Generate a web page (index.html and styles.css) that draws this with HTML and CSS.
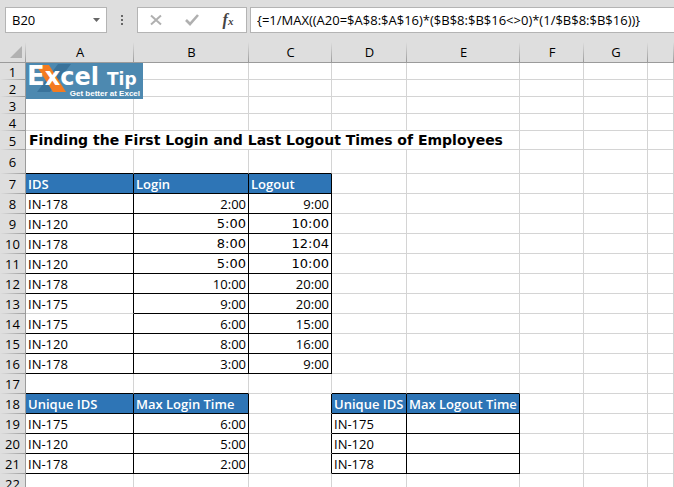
FILE: index.html
```html
<!DOCTYPE html>
<html lang="en">
<head>
	<meta charset="UTF-8">
	<title>Login and Logout Times</title>
	<link rel="stylesheet" href="styles.css">
</head>
<body>
	<div class="toolbar">
		<div class="name-box">
			<input class="name-input" type="text" value="B20" aria-label="Name Box">
			<button class="drop" type="button" aria-label="Open names"><svg width="7" height="4" viewBox="0 0 7 4"><path d="M0 0h7L3.5 4z" fill="#666"/></svg></button>
		</div>
		<span class="dots"><i></i><i></i><i></i></span>
		<div class="tools">
			<button type="button" aria-label="Cancel"><svg width="12" height="12" viewBox="0 0 12 12"><path d="M1 1.500l10 9M11 1.500L1 10.500" stroke="#b0b0b0" stroke-width="2" fill="none"/></svg></button>
			<button type="button" aria-label="Enter"><svg width="14" height="12" viewBox="0 0 14 12"><path d="M1 6l4 4L13 1" stroke="#b0b0b0" stroke-width="2.600" fill="none"/></svg></button>
			<button class="fx" type="button" aria-label="Insert Function"><span>f<small>x</small></span></button>
		</div>
		<input class="formula" type="text" aria-label="Formula" value="{=1/MAX((A20=$A$8:$A$16)*($B$8:$B$16&lt;&gt;0)*(1/$B$8:$B$16))}">
	</div>

	<table class="sheet">
		<colgroup>
			<col class="c-num"><col class="c-a"><col class="c-b"><col class="c-c"><col class="c-d"><col class="c-e"><col class="c-f"><col class="c-g"><col>
		</colgroup>
		<thead>
			<tr><th class="corner"><svg width="12" height="12" viewBox="0 0 12 12"><path d="M12 0v12H0z" fill="#b1b1b1"/></svg></th><th>A</th><th>B</th><th>C</th><th>D</th><th>E</th><th>F</th><th>G</th><th></th></tr>
		</thead>
		<tbody>
			<tr class="short">
				<th>1</th>
				<td class="logo-cell">
					<svg class="logo" width="117" height="36" viewBox="0 0 117 36">
						<rect width="117" height="36" fill="#4d89b0"/>
						<path d="M32 1h13L24 29H11z" fill="#3a739b"/>
						<path d="M10 2h13l17 27H27z" fill="#f47b20"/>
						<text class="logo-big" x="1" y="22"><tspan font-size="26">E</tspan><tspan font-size="24">xcel</tspan></text>
						<text class="logo-big" x="81" y="22" font-size="17">Tip</text>
						<text class="logo-small" x="114" y="33" text-anchor="end">Get better at Excel</text>
					</svg>
				</td>
				<td></td><td></td><td></td><td></td><td></td><td></td><td></td>
			</tr>
			<tr class="short"><th>2</th><td></td><td></td><td></td><td></td><td></td><td></td><td></td><td></td></tr>
			<tr class="short"><th>3</th><td></td><td></td><td></td><td></td><td></td><td></td><td></td><td></td></tr>
			<tr class="short"><th>4</th><td></td><td></td><td></td><td></td><td></td><td></td><td></td><td></td></tr>
			<tr class="title-row"><th>5</th><td colspan="5" class="title">Finding the First Login and Last Logout Times of Employees</td><td></td><td></td><td></td></tr>
			<tr class="tall"><th>6</th><td class="u"></td><td class="u"></td><td class="u"></td><td></td><td></td><td></td><td></td><td></td></tr>
			<tr><th>7</th><td class="box head">IDS</td><td class="box head">Login</td><td class="box head">Logout</td><td></td><td></td><td></td><td></td><td></td></tr>
			<tr><th>8</th><td class="box">IN-178</td><td class="box time">2:00</td><td class="box time">9:00</td><td></td><td></td><td></td><td></td><td></td></tr>
			<tr><th>9</th><td class="box">IN-120</td><td class="box time wide">5:00</td><td class="box time wide">10:00</td><td></td><td></td><td></td><td></td><td></td></tr>
			<tr><th>10</th><td class="box">IN-178</td><td class="box time wide">8:00</td><td class="box time wide">12:04</td><td></td><td></td><td></td><td></td><td></td></tr>
			<tr><th>11</th><td class="box">IN-120</td><td class="box time wide">5:00</td><td class="box time wide">10:00</td><td></td><td></td><td></td><td></td><td></td></tr>
			<tr><th>12</th><td class="box">IN-178</td><td class="box time">10:00</td><td class="box time">20:00</td><td></td><td></td><td></td><td></td><td></td></tr>
			<tr><th>13</th><td class="r">IN-175</td><td class="box time">9:00</td><td class="box time">20:00</td><td></td><td></td><td></td><td></td><td></td></tr>
			<tr><th>14</th><td class="box">IN-175</td><td class="box time">6:00</td><td class="box time">15:00</td><td></td><td></td><td></td><td></td><td></td></tr>
			<tr><th>15</th><td class="box">IN-120</td><td class="box time">8:00</td><td class="box time">16:00</td><td></td><td></td><td></td><td></td><td></td></tr>
			<tr><th>16</th><td class="box">IN-178</td><td class="box time">3:00</td><td class="box time">9:00</td><td></td><td></td><td></td><td></td><td></td></tr>
			<tr><th>17</th><td class="u"></td><td class="u"></td><td></td><td class="u"></td><td class="u"></td><td></td><td></td><td></td></tr>
			<tr><th>18</th><td class="box head">Unique IDS</td><td class="box head">Max Login Time</td><td class="r"></td><td class="box head">Unique IDS</td><td class="box head">Max Logout Time</td><td></td><td></td><td></td></tr>
			<tr><th>19</th><td class="box">IN-175</td><td class="box time">6:00</td><td class="r"></td><td class="box">IN-175</td><td class="box"></td><td></td><td></td><td></td></tr>
			<tr><th>20</th><td class="box">IN-120</td><td class="box time">5:00</td><td class="r"></td><td class="box">IN-120</td><td class="box"></td><td></td><td></td><td></td></tr>
			<tr><th>21</th><td class="box">IN-178</td><td class="box time">2:00</td><td class="r"></td><td class="box">IN-178</td><td class="box"></td><td></td><td></td><td></td></tr>
			<tr><th>22</th><td></td><td></td><td></td><td></td><td></td><td></td><td></td><td></td></tr>
		</tbody>
	</table>
</body>
</html>
```

FILE: styles.css
```css
* {
	box-sizing: border-box;
}
body {
	margin: 0;
	height: 100vh;
	overflow: hidden;
	background: #fff;
	color: #000;
	font-family: "Open Sans", "Noto Sans", sans-serif;
	font-size: 13px;
}
button, input {
	margin: 0;
	padding: 0;
	border: 0;
	background: none;
	color: inherit;
	font: inherit;
}

/* formula bar */
.toolbar {
	display: flex;
	height: 42px;
	padding: 7px 0 9px 5px;
	background: #dedede;
}
.name-box, .tools, .formula {
	border: 1px solid #b4b4b4;
	background: #fff;
}
.name-box {
	display: flex;
	width: 102px;
}
.name-input {
	flex: 1;
	min-width: 0;
	padding-left: 6px;
}
.drop {
	display: flex;
	align-items: center;
	justify-content: center;
	width: 20px;
}
.dots {
	display: flex;
	flex-direction: column;
	align-items: center;
	justify-content: center;
	gap: 2px;
	width: 30px;
}
.dots i {
	width: 2px;
	height: 2px;
	background: #666;
}
.tools {
	display: flex;
	width: 110px;
}
.tools button {
	display: flex;
	flex: 1;
	align-items: center;
	justify-content: center;
}
.tools .fx {
	color: #444;
	font: italic bold 16px/16px "Liberation Serif", serif;
}
.fx small {
	font-size: 11px;
}
.formula {
	flex: 1;
	min-width: 0;
	margin-left: 3px;
	padding-left: 6px;
	border-right: 0;
}

/* grid */
.sheet {
	width: 100%;
	table-layout: fixed;
	border-collapse: separate;
	border-spacing: 0;
}
.c-num { width: 26px; }
.c-a { width: 108px; }
.c-b { width: 115px; }
.c-c { width: 83px; }
.c-d { width: 75px; }
.c-e { width: 113px; }
.c-f, .c-g { width: 64px; }
th, td {
	height: 20px;
	padding: 0 2px;
	border-right: 1px solid #d4d4d4;
	border-bottom: 1px solid #d4d4d4;
	line-height: 14px;
	text-align: left;
	white-space: nowrap;
}
th {
	padding: 0;
	border-right-color: #9b9b9b;
	border-bottom: 0;
	background: linear-gradient(to right, #dedede, #9b9b9b) bottom / 100% 1px no-repeat #dedede;
	font-weight: normal;
	text-align: center;
}
thead th {
	height: 21px;
	border-right: 0;
	border-bottom: 1px solid #9b9b9b;
	background: linear-gradient(#dedede, #9b9b9b) right / 1px 100% no-repeat #dedede;
}
.corner {
	padding-right: 4px;
}
.corner svg {
	display: block;
	margin-left: auto;
}
.short th, .short td {
	height: 17px;
}
.title-row th, .title-row td {
	height: 19px;
}
.tall th, .tall td {
	height: 24px;
}
.logo-cell {
	position: relative;
}
.logo {
	position: absolute;
	top: 0;
	left: 0;
}
.logo-big {
	fill: #fff;
	font-family: "DejaVu Sans", Verdana, sans-serif;
	font-weight: bold;
}
.logo-small {
	fill: #fff;
	font: bold 8px "Liberation Sans", Arial, sans-serif;
}
.sheet .title {
	padding-left: 3px;
	font-family: "DejaVu Sans", Verdana, sans-serif;
	font-size: 14px;
	font-weight: bold;
}
.u {
	border-bottom-color: #000;
}
.r {
	border-right-color: #000;
}
.box {
	border-color: #000;
}
.head {
	background: #2e75b6;
	color: #fff;
	font-weight: 600;
}
.time {
	text-align: right;
}
.wide {
	font-family: "DejaVu Sans", Verdana, sans-serif;
}
```
